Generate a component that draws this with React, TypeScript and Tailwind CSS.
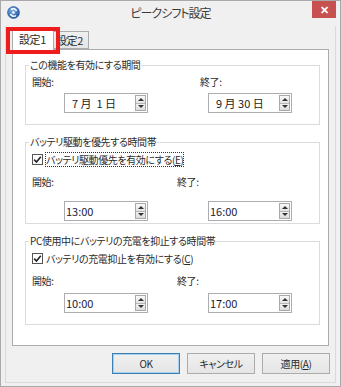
import React from 'react';

function AppIcon() {
  return (
    <svg width="13" height="13" viewBox="0 0 13 13">
      <defs>
        <radialGradient id="g" cx="40%" cy="35%" r="70%">
          <stop offset="0" stopColor="#7fb4ec" />
          <stop offset="1" stopColor="#1d4f9c" />
        </radialGradient>
      </defs>
      <circle cx="6.5" cy="6.5" r="6" fill="url(#g)" stroke="#2a5da8" strokeWidth="0.6" />
      <path d="M4 3.5 A3.5 3.5 0 0 1 9.5 5" stroke="#fff" strokeWidth="1.6" fill="none" />
      <path d="M9 9.5 A3.5 3.5 0 0 1 3.5 8" stroke="#fff" strokeWidth="1.6" fill="none" />
      <circle cx="6.5" cy="6.5" r="1.3" fill="#fff" />
    </svg>
  );
}

function SpinBox({ value, date }: { value: React.ReactNode; date?: boolean }) {
  return (
    <div className="w-[84px] h-[20px] border border-[#abadb3] bg-white flex items-center">
      <div
        className={`flex-1 leading-[18px] text-[11px] tracking-normal ${
          date ? 'pl-[7px] text-[#222]' : 'pl-[1px] text-[#1a1a3a]'
        }`}
      >
        {value}
      </div>
      <div className="w-[11px] h-[16px] mr-[1px] flex flex-col border border-[#a9a9a9]">
        <div className="flex-1 bg-gradient-to-b from-[#fafafa] to-[#e2e2e2] border-b border-[#b5b5b5] flex items-center justify-center">
          <div className="w-0 h-0 border-x-[3px] border-x-transparent border-b-[3px] border-b-[#333]" />
        </div>
        <div className="flex-1 bg-gradient-to-b from-[#f2f2f2] to-[#dcdcdc] flex items-center justify-center">
          <div className="w-0 h-0 border-x-[3px] border-x-transparent border-t-[3px] border-t-[#333]" />
        </div>
      </div>
    </div>
  );
}

function Check({ label, focus }: { label: React.ReactNode; focus?: boolean }) {
  return (
    <div className="flex items-center h-[14px]">
      <div className="w-[11px] h-[11px] border border-[#555] bg-white flex items-center justify-center">
        <svg width="9" height="9" viewBox="0 0 9 9">
          <path d="M1.2 4.6 L3.5 7 L7.8 1.8" stroke="#222" strokeWidth="1.6" fill="none" />
        </svg>
      </div>
      <div className={`ml-[2px] leading-[13px] ${focus ? 'border border-dotted border-[#333]' : 'border border-transparent'}`}>
        {label}
      </div>
    </div>
  );
}

function Group({ title, className, children }: { title: string; className?: string; children: React.ReactNode }) {
  return (
    <fieldset className={`mx-[12px] mr-[8px] border border-[#dcdcdc] pl-[6px] ${className ?? ''}`}>
      <legend className="ml-[-3px] px-[1px] leading-[14px]">{title}</legend>
      {children}
    </fieldset>
  );
}

function Btn({ children, primary }: { children: React.ReactNode; primary?: boolean }) {
  return (
    <div
      className={`w-[68px] h-[21px] flex items-center justify-center border bg-gradient-to-b from-[#f0f0f0] to-[#e5e5e5] ${
        primary ? 'border-[#3c7fb1] shadow-[inset_0_0_0_1px_#a6d0f0]' : 'border-[#acacac]'
      }`}
    >
      {children}
    </div>
  );
}

export default function App() {
  return (
    <div className="w-[341px] h-[387px] bg-[#f0f0f0] border border-[#a9a9a9] flex flex-col font-['Noto_Sans_CJK_JP','Noto_Sans',sans-serif] text-[10px] tracking-[-0.4px] text-[#2b2b2b] [font-feature-settings:'palt']">
      {/* title bar */}
      <div className="h-[25px] grid grid-cols-[1fr_auto_1fr]">
        <div className="pl-[6px] pt-[5px]">
          <AppIcon />
        </div>
        <div className="pt-[4px] text-[12px] tracking-[-1px] text-[#3a3a3a] leading-[16px]">ピークシフト設定</div>
        <div className="flex justify-end pr-[4px]">
          <div className="w-[24px] h-[17px] bg-[#c75050] flex items-center justify-center text-white text-[11px] font-bold leading-none tracking-normal">
            ✕
          </div>
        </div>
      </div>

      {/* client area */}
      <div className="flex-1 mx-[4px] mb-[3px] border border-t-0 border-[#dadada] flex flex-col px-[6px]">
        {/* tabs */}
        <div className="h-[23px] flex items-end relative">
          <div className="w-[42px] h-[22px] -mb-[1px] bg-white border border-b-0 border-[#acacac] z-10 pl-[6px] leading-[20px] text-[11px]">
            設定1
          </div>
          <div className="w-[35px] h-[18px] bg-gradient-to-b from-[#f0f0f0] to-[#e5e5e5] border border-l-0 border-[#acacac] pl-[2px] leading-[16px] text-[11px]">
            設定2
          </div>
          {/* red annotation */}
          <div className="absolute left-[-6px] top-[1px] w-[54px] h-[27px] border-[4px] border-[#ee1c1c] z-20" />
        </div>

        {/* tab panel */}
        <div className="h-[297px] border border-[#acacac] bg-white pt-[8px] flex flex-col">
          <Group title="この機能を有効にする期間" className="pb-[11px]">
            <div className="flex mt-[3px]">
              <div className="w-[145px] flex flex-col">
                <div className="leading-[14px]">開始:</div>
                <div className="ml-[32px] mt-[4px]">
                  <SpinBox date value={<span>7 月&nbsp;&nbsp;1 日</span>} />
                </div>
              </div>
              <div className="flex flex-col">
                <div className="leading-[14px] ml-[23px]">終了:</div>
                <div className="ml-[31px] mt-[4px]">
                  <SpinBox date value={<span>9 月 30 日</span>} />
                </div>
              </div>
            </div>
          </Group>

          <Group title="バッテリ駆動を優先する時間帯" className="mt-[10px] pb-[2px]">
            <div className="mt-[3px]">
              <Check
                focus
                label={
                  <span>
                    バッテリ駆動優先を有効にする(<span className="underline">E</span>)
                  </span>
                }
              />
            </div>
            <div className="flex mt-[9px]">
              <div className="w-[145px] flex flex-col">
                <div className="leading-[14px]">開始:</div>
                <div className="ml-[32px] mt-[12px]">
                  <SpinBox value="13:00" />
                </div>
              </div>
              <div className="flex flex-col">
                <div className="leading-[14px]">終了:</div>
                <div className="ml-[31px] mt-[12px]">
                  <SpinBox value="16:00" />
                </div>
              </div>
            </div>
          </Group>

          <Group title="PC使用中にバッテリの充電を抑止する時間帯" className="mt-[10px] pb-[11px]">
            <div className="mt-[3px]">
              <Check
                label={
                  <span>
                    バッテリの充電抑止を有効にする(<span className="underline">C</span>)
                  </span>
                }
              />
            </div>
            <div className="flex mt-[9px]">
              <div className="w-[145px] flex flex-col">
                <div className="leading-[14px]">開始:</div>
                <div className="ml-[32px] mt-[5px]">
                  <SpinBox value="10:00" />
                </div>
              </div>
              <div className="flex flex-col">
                <div className="leading-[14px]">終了:</div>
                <div className="ml-[31px] mt-[5px]">
                  <SpinBox value="17:00" />
                </div>
              </div>
            </div>
          </Group>
        </div>

        {/* buttons */}
        <div className="flex justify-end gap-[7px] mt-[7px] -mr-[1px]">
          <Btn primary>OK</Btn>
          <Btn>キャンセル</Btn>
          <Btn>
            <span>
              適用(<span className="underline">A</span>)
            </span>
          </Btn>
        </div>
      </div>
    </div>
  );
}
